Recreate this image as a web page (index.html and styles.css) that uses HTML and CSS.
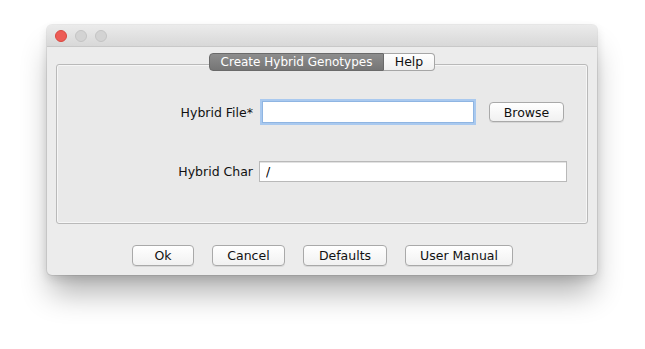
FILE: index.html
```html
<!DOCTYPE html>
<html lang="en">
<head>
    <meta charset="UTF-8">
    <title>Create Hybrid Genotypes</title>
    <link rel="stylesheet" href="styles.css">
</head>
<body>
    <div class="window">
        <div class="titlebar">
            <span class="light close"></span>
            <span class="light"></span>
            <span class="light"></span>
        </div>

        <div class="content">
            <div class="tabs">
                <div class="tab active">Create Hybrid Genotypes</div>
                <div class="tab help">Help</div>
            </div>

            <div class="panel">
                <div class="row">
                    <label class="label">Hybrid File*</label>
                    <input class="field focused" type="text" value="">
                    <button class="button browse">Browse</button>
                </div>
                <div class="row">
                    <label class="label">Hybrid Char</label>
                    <input class="field wide" type="text" value="/">
                </div>
            </div>

            <div class="actions">
                <button class="button ok">Ok</button>
                <button class="button cancel">Cancel</button>
                <button class="button defaults">Defaults</button>
                <button class="button manual">User Manual</button>
            </div>
        </div>
    </div>
</body>
</html>
```

FILE: styles.css
```css
* {
    margin: 0;
    padding: 0;
    box-sizing: border-box;
}

body {
    font-family: "DejaVu Sans", "Liberation Sans", sans-serif;
    font-size: 12px;
    background: #ffffff;
    color: #111;
    padding: 25px 0 0 47px;
    min-height: 349px;
}

.window {
    width: 550px;
    height: 250px;
    background: #ececec;
    border-radius: 5px;
    box-shadow: 0 0 0 1px rgba(0, 0, 0, 0.07), 0 4px 10px rgba(0, 0, 0, 0.12), 0 22px 30px -4px rgba(0, 0, 0, 0.3);
    overflow: hidden;
}

.titlebar {
    height: 22px;
    background: linear-gradient(#ebebeb, #d8d8d8);
    border-bottom: 1px solid #c8c8c8;
    display: flex;
    align-items: center;
    gap: 8px;
    padding-left: 8px;
}

.light {
    width: 12px;
    height: 12px;
    border-radius: 50%;
    background: #d3d3d3;
    border: 1px solid #c4c4c4;
}

.light.close {
    background: #ed5c56;
    border-color: #d8483f;
}

.content {
    padding: 6px 9px 0 9px;
}

.tabs {
    display: flex;
    justify-content: center;
    height: 18px;
    margin-bottom: -7px;
    position: relative;
    z-index: 1;
}

.tab {
    height: 18px;
    line-height: 16px;
    font-size: 12.5px;
    white-space: nowrap;
    text-align: center;
    border: 1px solid #a6a6a6;
    background: linear-gradient(#ffffff, #f0f0f0);
    color: #111;
}

.tab.active {
    width: 175px;
    border-radius: 4px 0 0 4px;
    background: linear-gradient(#8d8d8d, #757575);
    border-color: #6a6a6a;
    color: #ffffff;
    font-size: 12px;
}

.tab.help {
    width: 51px;
    border-left: none;
    border-radius: 0 4px 4px 0;
}

.panel {
    height: 160px;
    background: #e9e9e9;
    border: 1px solid #b9b9b9;
    border-radius: 3px;
    box-shadow: inset 0 0 0 1px #f6f6f6;
    padding: 33px 0 0 20px;
    display: flex;
    flex-direction: column;
    gap: 31px;
}

.row {
    display: flex;
    align-items: center;
    height: 28px;
}

.label {
    width: 176px;
    margin-right: 6px;
    text-align: right;
    font-size: 12.5px;
}

.field {
    height: 22px;
    border: 1px solid #b9b9b9;
    background: #ffffff;
    font-family: inherit;
    font-size: 12.5px;
    padding: 0 6px;
    outline: none;
    box-shadow: inset 0 1px 0 #e2e2e2;
}

.field.focused {
    width: 212px;
    margin: 0 3px;
    border-color: #8fb5e2;
    box-shadow: 0 0 0 2px #a9c9ef;
}

.field.wide {
    width: 308px;
    height: 21px;
}

.button {
    height: 21px;
    font-family: inherit;
    font-size: 12.5px;
    color: #111;
    background: linear-gradient(#ffffff, #f1f1f1);
    border: 1px solid #a9a9a9;
    border-radius: 4px;
    box-shadow: 0 1px 0 rgba(0, 0, 0, 0.08);
}

.browse {
    width: 75px;
    margin-left: 12px;
    height: 20px;
}

.actions {
    display: flex;
    justify-content: center;
    gap: 18px;
    margin-top: 21px;
    padding-left: 1px;
}

.ok { width: 62px; }
.cancel { width: 73px; }
.defaults { width: 84px; }
.manual { width: 108px; }
```
